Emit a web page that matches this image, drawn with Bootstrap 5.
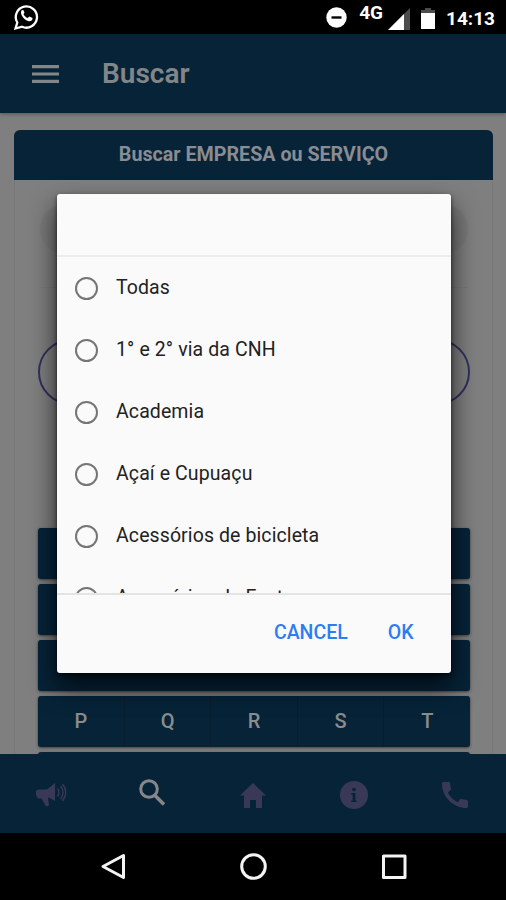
<!DOCTYPE html>
<html lang="pt-BR">
<head>
<meta charset="utf-8">
<meta name="viewport" content="width=device-width, initial-scale=1">
<title>Buscar</title>
<link href="https://cdn.jsdelivr.net/npm/bootstrap@5.3.0/dist/css/bootstrap.min.css" rel="stylesheet">
<style>
  html, body { height: 100%; }
  body { font-family: Roboto, "Liberation Sans", sans-serif; background: #000; overflow: hidden; }
  svg { display: block; flex: none; }
  .screen { width: 506px; height: 900px; overflow: hidden; }
  .statusbar { height: 34px; background: #000; color: #fff; padding: 0 11px 0 14px; }
  .net { font-size: 19px; line-height: 18px; font-weight: 700; margin: 4px 5px 0 12px; }
  .clock { font-size: 19px; line-height: 34px; font-weight: 700; margin-left: 8px; padding-top: 3px; }
  .topbar { height: 79px; background: #062338; color: #838689; padding-left: 32px; box-shadow: 0 1px 4px rgba(0,0,0,.35); z-index: 1; }
  .topbar h1 { font-size: 28px; font-weight: 600; line-height: 40px; margin-left: 43px; }
  .page { height: 641px; background: #7f7f7f; padding: 17px 13px 0 14px; overflow: hidden; }
  .panel { height: 700px; border: 1px solid #777; border-top: 0; border-radius: 6px 6px 0 0; }
  .panel-title { height: 50px; margin: 0 -1px; background: #062338; color: #8a8c91; border-radius: 6px 6px 0 0; font-size: 19.7px; font-weight: 700; line-height: 49px; }
  .panel-main { padding: 24px 22px 0 23px; }
  .ghost { height: 50px; background: #7a7a7a; border-radius: 25px; margin: 0 2px; }
  .rule { height: 1px; background: #797979; margin: 33px 2px 51px; }
  .pill { height: 66px; border: 2px solid #31305f; border-radius: 33px; margin-bottom: 122.5px; }
  .letters { height: 51px; margin-bottom: 5.2px; background: #062338; border-radius: 3px; box-shadow: 0 1px 3px rgba(0,0,0,.5); color: #8b8c8d; font-size: 20px; font-weight: 500; line-height: 51px; }
  .letters span + span { border-left: 1px solid #0a1c30; }
  .tabs { height: 79px; background: #062338; color: #393957; padding-top: 2px; }
  .sysnav { height: 67px; background: #000; color: #f4f4f4; }
  .dialog { left: 57px; top: 194px; width: 393.5px; height: 479px; background: #fafafa; border-radius: 3px; box-shadow: 0 13px 26px 1px rgba(0,0,0,.68), 0 2px 4px rgba(0,0,0,.6); overflow: hidden; z-index: 5; }
  .dialog-head { height: 63px; border-bottom: 2px solid #ededed; }
  .options { height: 336px; overflow: hidden; }
  .option { height: 62px; padding-left: 18px; font-size: 19.5px; color: #222; letter-spacing: .1px; }
  .ring { width: 23px; height: 23px; border: 2.5px solid #757575; border-radius: 50%; margin-right: 18px; flex: none; }
  .dialog-foot { height: 80px; border-top: 2px solid #e4e4e4; padding: 0 22px 2px 0; }
  .action { border: 0; background: none; color: #2c7df5; font-size: 19.5px; font-weight: 500; line-height: 30px; padding: 0 15px; }
  .action + .action { margin-left: 10px; }
</style>
</head>
<body>
<div class="screen d-flex flex-column position-relative">
  <div class="statusbar d-flex align-items-center flex-shrink-0">
    <svg width="25" height="27" viewBox="0 0 25 27" fill="none" stroke="#fff"><path d="M1.5 24.500l1.800-6A10.600 10.600 0 1 1 8 22.700z" stroke-width="2.300"/><path d="M7.700 6.200c-1.200 1.500-1 3.500.4 5.700 1.700 2.700 4 4.700 6.600 5.300 1.800.3 3.300-.6 3.700-1.900l.1-1.400-3-1.500-1.800 1.700c-1.900-.8-3.200-2-4.200-3.900l1-1.600-1.200-2.700z" fill="#fff" stroke="none"/></svg>
    <svg class="ms-auto" width="21" height="21" viewBox="0 0 21 21"><circle cx="10.500" cy="10.500" r="10.200" fill="#fff"/><path d="M5.500 10.500h10" stroke="#000" stroke-width="2.400"/></svg>
    <span class="net align-self-start">4G</span>
    <svg class="mt-1" width="22" height="22" viewBox="0 0 22 22"><path d="M0 22L22 0v22z" fill="#4c4c4c"/><path d="M0 22L16 6v16z" fill="#fff"/></svg>
    <svg class="ms-2 mt-1" width="20" height="22" viewBox="0 0 20 22"><path d="M3 2h4V0h6v2h4v4H3z" fill="#4c4c4c"/><path d="M3 5h14v16H3z" fill="#fff"/></svg>
    <span class="clock">14:13</span>
  </div>
  <header class="topbar d-flex align-items-center position-relative flex-shrink-0">
    <svg width="27" height="18" viewBox="0 0 27 18"><path d="M0 1.600h27M0 9h27M0 16.400h27" stroke="#838689" stroke-width="3.200"/></svg>
    <h1 class="mb-0">Buscar</h1>
  </header>
  <main class="page flex-shrink-0">
    <section class="panel">
      <div class="panel-title text-center">Buscar EMPRESA ou SERVIÇO</div>
      <div class="panel-main">
        <div class="ghost"></div>
        <div class="rule"></div>
        <div class="pill"></div>
        <div class="letters"></div>
        <div class="letters"></div>
        <div class="letters"></div>
        <div class="letters d-flex text-center"><span class="flex-fill w-100">P</span><span class="flex-fill w-100">Q</span><span class="flex-fill w-100">R</span><span class="flex-fill w-100">S</span><span class="flex-fill w-100">T</span></div>
        <div class="letters"></div>
      </div>
    </section>
  </main>
  <nav class="tabs row g-0 align-items-center flex-shrink-0">
    <div class="col d-flex justify-content-center"><svg width="32" height="26" viewBox="0 0 32 26"><path d="M1 8.500L4 7.500h8L20 1v18l-6-3.500-1 1 1 7-3 1-4.500-8H3L1 13z" fill="currentColor"/><path d="M22.500 6.500q3 4 0 8M25.500 4q5 6.500 0 13M27.500 2q6.500 8 0 17" fill="none" stroke="currentColor" stroke-width="1.400"/></svg></div>
    <div class="col d-flex justify-content-center pb-1"><svg width="27" height="32" viewBox="0 0 27 32" fill="none" stroke="#85878a"><circle cx="11" cy="12" r="8.300" stroke-width="3"/><path d="M16.500 18l9.500 9.500" stroke-width="3.600"/></svg></div>
    <div class="col d-flex justify-content-center"><svg width="28" height="26" viewBox="0 0 28 26"><path d="M14 1l13 12.500h-4V26h-6v-8h-6v8H5V13.500H1z" fill="currentColor"/></svg></div>
    <div class="col d-flex justify-content-center"><svg width="28" height="28" viewBox="0 0 28 28"><circle cx="14" cy="14" r="14" fill="currentColor"/><circle cx="14" cy="8.500" r="1.800" fill="#062338"/><path d="M11.200 12h4.200v7.500h1.300v1.500h-5.500v-1.500h1.400v-6h-1.400z" fill="#062338"/></svg></div>
    <div class="col d-flex justify-content-center"><svg width="26" height="26" viewBox="3 3 18 18"><path d="M20.010 15.380c-1.230 0-2.420-.2-3.530-.56-.35-.12-.74-.03-1.010.24l-1.570 1.970c-2.830-1.350-5.480-3.900-6.890-6.830l1.950-1.660c.27-.28.35-.67.24-1.020-.37-1.110-.56-2.300-.56-3.530 0-.54-.45-.99-.99-.99H4.190C3.650 3 3 3.240 3 3.990 3 13.280 10.730 21 20.010 21c.71 0 .99-.63.99-1.180v-3.450c0-.54-.45-.99-.99-.99z" fill="currentColor"/></svg></div>
  </nav>
  <div class="sysnav d-flex justify-content-center align-items-center flex-shrink-0">
    <svg width="422" height="30" viewBox="0 0 422 30" fill="none" stroke="currentColor" stroke-width="3" stroke-linejoin="round"><path d="M81.500 3.500v22L61 14.500z"/><circle cx="211.500" cy="14.500" r="11.800"/><rect x="341.500" y="4" width="21.500" height="21.500"/></svg>
  </div>

  <div class="dialog position-absolute" role="dialog">
    <div class="dialog-head"></div>
    <div class="options">
      <div class="option d-flex align-items-center"><i class="ring"></i><span>Todas</span></div>
      <div class="option d-flex align-items-center"><i class="ring"></i><span>1° e 2° via da CNH</span></div>
      <div class="option d-flex align-items-center"><i class="ring"></i><span>Academia</span></div>
      <div class="option d-flex align-items-center"><i class="ring"></i><span>Açaí e Cupuaçu</span></div>
      <div class="option d-flex align-items-center"><i class="ring"></i><span>Acessórios de bicicleta</span></div>
      <div class="option d-flex align-items-center"><i class="ring"></i><span>Acessórios de Festas</span></div>
    </div>
    <div class="dialog-foot d-flex justify-content-end align-items-center">
      <button class="action" type="button">CANCEL</button>
      <button class="action" type="button">OK</button>
    </div>
  </div>
</div>
<script src="https://cdn.jsdelivr.net/npm/bootstrap@5.3.0/dist/js/bootstrap.bundle.min.js"></script>
</body>
</html>
